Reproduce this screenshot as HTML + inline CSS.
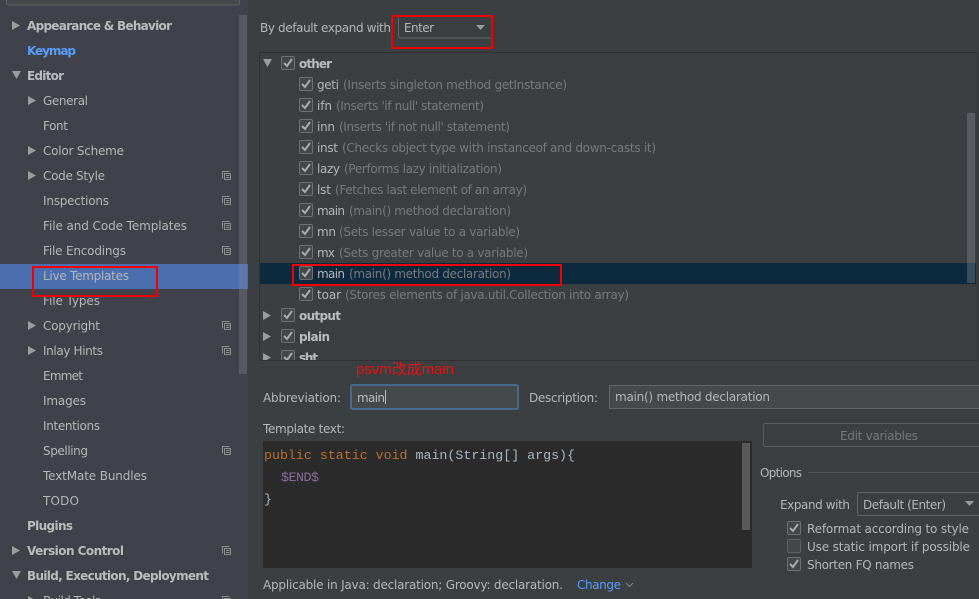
<!DOCTYPE html>
<html><head><meta charset="utf-8"><style>
html,body{margin:0;padding:0;background:#3c3f41;width:979px;height:599px;overflow:hidden}
svg{display:block}
text{font-family:"DejaVu Sans","Noto Sans CJK SC",sans-serif;font-size:12px;fill:#b4b6b8}
.b{font-weight:bold;fill:#b9bbbd}
.g{fill:#777a7c}
.c{font-family:"Liberation Mono",monospace;font-size:13.3px;fill:#a9b7c6}
</style></head><body>
<svg width="979" height="599" viewBox="0 0 979 599" xmlns="http://www.w3.org/2000/svg">
<defs>
<g id="cp" fill="none" stroke="#8b8e90" stroke-width="1"><path d="M222.5 178.5V171.500H229.500"/><rect x="224.500" y="173.500" width="6" height="6" fill="#3f424a"/><path d="M226 175.500h3.500M226 177.500h3.500" stroke-width="1"/></g>
<g id="r"><path d="M0 0l8 4.500-8 4.500z" fill="#9a9c9e"/></g>
<g id="d"><path d="M0 0h9l-4.500 8z" fill="#9a9c9e"/></g>
<g id="ck"><rect x=".5" y=".5" width="13" height="13" rx="1.500" fill="#43474a" stroke="#6e7072"/><path d="M3 7l3 3 5-7" fill="none" stroke="#a9abad" stroke-width="2"/></g>
<clipPath id="tc"><rect x="260" y="53" width="717" height="307"/></clipPath>
</defs>

<!-- sidebar -->
<rect x="0" y="0" width="248" height="599" fill="#3f424a"/>
<rect x="6.500" y="-6" width="233" height="11" rx="2" fill="#45494a" stroke="#5f6263"/>
<rect x="0" y="264" width="248" height="25" fill="#4b6eaf"/>
<rect x="239" y="15" width="8" height="359" fill="#8a8f99" fill-opacity=".3"/>

<use href="#r" x="12" y="21"/><use href="#d" x="12" y="71"/>
<use href="#r" x="28" y="96"/><use href="#r" x="28" y="146"/><use href="#r" x="28" y="171"/>
<use href="#r" x="28" y="321"/><use href="#r" x="28" y="346"/>
<use href="#r" x="12" y="546"/><use href="#d" x="12" y="571"/><use href="#r" x="28" y="596"/>

<text class="b" x="27" y="30" textLength="145">Appearance &amp; Behavior</text>
<text class="b" x="27" y="55" textLength="49" style="fill:#589df6">Keymap</text>
<text class="b" x="27" y="80" textLength="37">Editor</text>
<text x="43" y="105" textLength="45">General</text>
<text x="43" y="130" textLength="25">Font</text>
<text x="43" y="155" textLength="81">Color Scheme</text>
<text x="43" y="180" textLength="62">Code Style</text>
<text x="43" y="205" textLength="66">Inspections</text>
<text x="43" y="230" textLength="144">File and Code Templates</text>
<text x="43" y="255" textLength="83">File Encodings</text>
<text x="43" y="280" textLength="86">Live Templates</text>
<text x="43" y="305" textLength="57">File Types</text>
<text x="43" y="330" textLength="57">Copyright</text>
<text x="43" y="355" textLength="60">Inlay Hints</text>
<text x="43" y="380" textLength="40">Emmet</text>
<text x="43" y="405" textLength="43">Images</text>
<text x="43" y="430" textLength="57">Intentions</text>
<text x="43" y="455" textLength="45">Spelling</text>
<text x="43" y="480" textLength="104">TextMate Bundles</text>
<text x="43" y="505" textLength="36">TODO</text>
<text class="b" x="27" y="530" textLength="46">Plugins</text>
<text class="b" x="27" y="555" textLength="97">Version Control</text>
<text class="b" x="27" y="580" textLength="182">Build, Execution, Deployment</text>
<text x="43" y="605" textLength="58">Build Tools</text>

<use href="#cp"/><use href="#cp" y="25"/><use href="#cp" y="50"/><use href="#cp" y="75"/>
<use href="#cp" y="150"/><use href="#cp" y="175"/><use href="#cp" y="275"/><use href="#cp" y="375"/><use href="#cp" y="425"/>

<rect x="33" y="267" width="124" height="29" fill="none" stroke="#f00000" stroke-width="2"/>

<!-- top -->
<text x="260" y="32" textLength="131">By default expand with</text>
<path d="M398.500 18v18q0 2 2 2H491" fill="none" stroke="#646464"/>
<text x="404" y="32" textLength="30">Enter</text>
<path d="M476 25h9l-4.500 5z" fill="#9a9c9e"/>
<rect x="392" y="16" width="100" height="32" fill="none" stroke="#f00000" stroke-width="2"/>

<!-- tree -->
<rect x="259.500" y="52.500" width="718" height="308" fill="#3c3f41" stroke="#323232"/>
<rect x="260" y="263" width="716" height="21" fill="#0d293e"/>
<rect x="967" y="113" width="8" height="170" fill="#8a8f99" fill-opacity=".35"/>
<g clip-path="url(#tc)">
<use href="#d" x="263" y="59"/><use href="#r" x="263" y="311"/><use href="#r" x="263" y="332"/><use href="#r" x="263" y="353"/>
<use href="#ck" x="281" y="56"/><use href="#ck" x="281" y="308"/><use href="#ck" x="281" y="329"/><use href="#ck" x="281" y="350"/>
<use href="#ck" x="299" y="77"/><use href="#ck" x="299" y="98"/><use href="#ck" x="299" y="119"/><use href="#ck" x="299" y="140"/><use href="#ck" x="299" y="161"/><use href="#ck" x="299" y="182"/><use href="#ck" x="299" y="203"/><use href="#ck" x="299" y="224"/><use href="#ck" x="299" y="245"/><use href="#ck" x="299" y="266"/><use href="#ck" x="299" y="287"/>
<text class="b" x="299" y="68" textLength="33">other</text>
<text x="317" y="89" textLength="22">geti</text><text class="g" x="343" y="89" textLength="224">(Inserts singleton method getInstance)</text>
<text x="317" y="110" textLength="15">ifn</text><text class="g" x="336" y="110" textLength="148">(Inserts 'if null' statement)</text>
<text x="317" y="131" textLength="18">inn</text><text class="g" x="339" y="131" textLength="171">(Inserts 'if not null' statement)</text>
<text x="317" y="152" textLength="21">inst</text><text class="g" x="342" y="152" textLength="314">(Checks object type with instanceof and down-casts it)</text>
<text x="317" y="173" textLength="23">lazy</text><text class="g" x="344" y="173" textLength="158">(Performs lazy initialization)</text>
<text x="317" y="194" textLength="14">lst</text><text class="g" x="335" y="194" textLength="192">(Fetches last element of an array)</text>
<text x="317" y="215" textLength="28">main</text><text class="g" x="349" y="215" textLength="162">(main() method declaration)</text>
<text x="317" y="236" textLength="19">mn</text><text class="g" x="339" y="236" textLength="181">(Sets lesser value to a variable)</text>
<text x="317" y="257" textLength="18">mx</text><text class="g" x="339" y="257" textLength="189">(Sets greater value to a variable)</text>
<text x="317" y="278" textLength="28">main</text><text class="g" x="349" y="278" textLength="162">(main() method declaration)</text>
<text x="317" y="299" textLength="24">toar</text><text class="g" x="345" y="299" textLength="284">(Stores elements of java.util.Collection into array)</text>
<text class="b" x="299" y="320" textLength="42">output</text>
<text class="b" x="299" y="341" textLength="31">plain</text>
<text class="b" x="299" y="362" textLength="19">sht</text>
</g>
<rect x="293" y="265" width="268" height="20" fill="none" stroke="#f00000" stroke-width="2"/>

<!-- abbreviation -->
<text x="356" y="374" textLength="98" style="fill:#e8120f;font-size:15px;font-family:'Liberation Sans','Noto Sans CJK SC',sans-serif">psvm改成main</text>
<text x="263" y="402" textLength="78">Abbreviation:</text>
<rect x="351" y="385" width="167" height="24" rx="1.500" fill="#45494a" stroke="#46698f" stroke-width="2"/>
<text x="357" y="402" textLength="28" style="fill:#bbb">main</text>
<rect x="385" y="390" width="1" height="14" fill="#bbb"/>
<text x="529" y="402" textLength="69">Description:</text>
<rect x="609.500" y="385.500" width="372" height="23" fill="#45494a" stroke="#646464"/>
<text x="615" y="401" textLength="155">main() method declaration</text>

<!-- template -->
<text x="263" y="433" textLength="82">Template text:</text>
<rect x="263" y="441" width="489" height="127" fill="#2b2b2b"/>
<rect x="742" y="443" width="8" height="87" fill="#5a5a5a"/>
<text class="c" x="264" y="459" textLength="311" xml:space="preserve"><tspan fill="#b9702f">public static void</tspan> main(String[] args){</text>
<text class="c" x="281" y="481" textLength="38" style="fill:#8a6c9c">$END$</text>
<text class="c" x="264" y="503">}</text>
<text x="263" y="589" textLength="300">Applicable in Java: declaration; Groovy: declaration.</text>
<text x="577" y="589" textLength="44" style="fill:#589df6">Change</text>
<path d="M626 583l3.500 3.500 3.500-3.500" fill="none" stroke="#7d8082" stroke-width="1.200"/>

<!-- right options -->
<rect x="763.500" y="423.500" width="230" height="23" rx="2" fill="none" stroke="#5a5c5e"/>
<text x="840" y="440" textLength="78" style="fill:#75787a">Edit variables</text>
<text x="760" y="477" textLength="42">Options</text>
<rect x="808" y="472" width="171" height="1" fill="#515355"/>
<text x="780" y="509" textLength="70">Expand with</text>
<rect x="857.500" y="492.500" width="130" height="23" rx="2" fill="#3c3f41" stroke="#5f6163"/>
<text x="863" y="509" textLength="83">Default (Enter)</text>
<path d="M965 501h9l-4.500 5z" fill="#9a9c9e"/>
<use href="#ck" x="787" y="521"/>
<rect x="787.500" y="539.500" width="13" height="13" rx="1.500" fill="#43474a" stroke="#5f6163"/>
<use href="#ck" x="787" y="557"/>
<text x="807" y="533" textLength="162">Reformat according to style</text>
<text x="807" y="551" textLength="163">Use static import if possible</text>
<text x="807" y="569" textLength="107">Shorten FQ names</text>
</svg>
</body></html>
